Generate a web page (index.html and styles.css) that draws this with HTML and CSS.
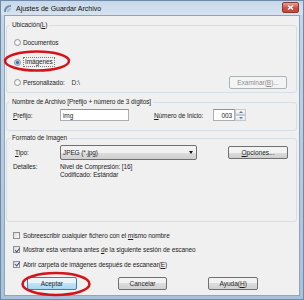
FILE: index.html
```html
<!DOCTYPE html>
<html lang="es">
  <head>
    <meta charset="UTF-8" />
    <title>Ajustes de Guardar Archivo</title>
    <link rel="stylesheet" href="styles.css">
  </head>
  <body>
    <div class="window">
      <div class="titlebar">
        <svg class="app-icon" width="9" height="9" viewBox="0 0 9 9">
          <path d="M1 8 C1 4 3 1 8 1 L8 3 C5 3 3 5 3 8 Z" fill="#6f8fb0" />
          <path d="M4 8 C4 6 5 4 8 4 L8 6 C6.5 6 6 7 6 8 Z" fill="#a9c0d8" />
        </svg>
        <span class="title">Ajustes de Guardar Archivo</span>
        <div class="close">
          <svg width="7" height="5" viewBox="0 0 7 5">
            <path d="M1 0.5 L6 4.5 M6 0.5 L1 4.5" stroke="#fff" stroke-width="1.4" />
          </svg>
        </div>
      </div>

      <div class="client">
        <fieldset class="group loc">
          <legend>Ubicación(<u>L</u>)</legend>
          <div class="row">
            <span class="radio"></span><span>Documentos</span>
          </div>
          <div class="row">
            <span class="radio checked"></span><span class="focus">Imágenes</span>
          </div>
          <div class="row">
            <span class="radio"></span><span>Personalizado:</span>
            <span class="path">D:\</span>
            <button class="btn disabled">Examinar(<u>B</u>)...</button>
          </div>
        </fieldset>

        <fieldset class="group name">
          <legend>Nombre de Archivo [Prefijo + número de 3 dígitos]</legend>
          <div class="field-row">
            <span class="lbl"><u>P</u>refijo:</span>
            <span class="input prefix">img</span>
            <span class="start-lbl"><u>N</u>úmero de Inicio:</span>
            <span class="input number">003</span>
            <span class="spin">
              <span class="up"></span>
              <span class="down"></span>
            </span>
          </div>
        </fieldset>

        <fieldset class="group format">
          <legend>Formato de Imagen</legend>
          <div class="field-row type-row">
            <span class="lbl"><u>T</u>ipo:</span>
            <span class="select"><span>JPEG (*.jpg)</span><span class="arrow"></span></span>
            <button class="btn options"><u>O</u>pciones...</button>
          </div>
          <div class="details">
            <span class="lbl">Detalles:</span>
            <div class="values">
              <div>Nivel de Compresión: [16]</div>
              <div>Codificado: Estándar</div>
            </div>
          </div>
        </fieldset>

        <div class="checks">
          <div class="check-row"><span class="checkbox"></span><span>Sobreescribir cualquier fichero con el <u>m</u>ismo nombre</span></div>
          <div class="check-row"><span class="checkbox checked"></span><span>Mostrar esta ventana antes <u>d</u>e la siguiente sesión de escaneo</span></div>
          <div class="check-row"><span class="checkbox checked"></span><span>Abrir carpeta de imágenes después de escanear(<u>E</u>)</span></div>
        </div>

        <div class="actions">
          <button class="btn default">Aceptar</button>
          <button class="btn">Cancelar</button>
          <button class="btn">Ayuda(<u>H</u>)</button>
        </div>
      </div>

      <svg class="marks" width="304" height="300" viewBox="0 0 304 300">
        <ellipse cx="37" cy="61" rx="32" ry="9.5" fill="none" stroke="#d3141b" stroke-width="2.5" />
        <ellipse cx="56" cy="284" rx="33.5" ry="11" fill="none" stroke="#d3141b" stroke-width="2.5" />
      </svg>
    </div>
  </body>
</html>
```

FILE: styles.css
```css
body {
  margin: 0;
  font-family: "Liberation Sans", Arial, sans-serif;
  font-size: 6.5px;
  letter-spacing: -0.1px;
  color: #1e1e1e;
}
.window {
  position: relative;
  width: 304px;
  height: 300px;
  box-sizing: border-box;
  background: linear-gradient(#c6d6e7, #a9c1da);
  border: 1px solid #6f8aa6;
  padding: 0 3px 3px;
  display: flex;
  flex-direction: column;
}
.titlebar {
  height: 14px;
  display: flex;
  align-items: center;
  margin: 0 -3px;
  padding: 0 4px 0 2px;
  background: linear-gradient(#c8d8e9, #d6e2ef);
}
.app-icon {
  margin-right: 4px;
}
.title {
  font-size: 7px;
  letter-spacing: 0;
  color: #111;
  flex: 1;
}
.close {
  width: 15px;
  height: 9px;
  border: 1px solid #8c3a35;
  border-radius: 2px;
  background: linear-gradient(#e5a49c, #c9513f 55%, #c44835);
  display: flex;
  align-items: center;
  justify-content: center;
  margin-top: -2px;
}
.client {
  flex: 1;
  background: #f0f0f0;
  border: 1px solid #8da6bf;
  display: flex;
  flex-direction: column;
}
.group {
  margin: 0 2px 0 1px;
  padding: 0;
  border: 1px solid #d5dfe5;
  border-radius: 3px;
  min-width: 0;
}
.group legend {
  margin-left: 3px;
  padding: 0 2px;
  line-height: 8px;
}
.loc {
  margin-top: 5px;
  padding-top: 3px;
}
.row {
  height: 20px;
  display: flex;
  align-items: center;
  padding-left: 7px;
}
.radio {
  width: 7px;
  height: 7px;
  box-sizing: border-box;
  border: 1px solid #8d959c;
  border-radius: 50%;
  background: radial-gradient(#fff, #e6e6e6);
  margin-right: 2px;
}
.radio.checked {
  background: radial-gradient(#3f6fa8 30%, #9fc0e2 55%, #e6e6e6 70%);
}
.focus {
  border: 1px dotted #777;
  padding: 0 1px;
  line-height: 8px;
}
.path {
  margin-left: 7px;
  color: #333;
}
.btn {
  font: inherit;
  height: 13px;
  padding: 0;
  border: 1px solid #707070;
  border-radius: 2px;
  background: linear-gradient(#f2f2f2 50%, #dddddd 50%, #cfcfcf);
  color: #1e1e1e;
}
.btn.disabled {
  border-color: #adb2b5;
  background: #f4f4f4;
  color: #8d8d8d;
}
.loc .btn {
  width: 58px;
  margin-left: auto;
  margin-right: 9px;
}
.name {
  margin-top: 5px;
  padding: 3px 0 9px;
}
.field-row {
  display: flex;
  align-items: center;
  padding-left: 6px;
}
.lbl {
  width: 47px;
}
.input {
  height: 12px;
  box-sizing: border-box;
  border: 1px solid #abadb3;
  border-top-color: #8e9196;
  background: #fff;
  display: flex;
  align-items: center;
  padding: 0 2px;
}
.prefix {
  width: 69px;
}
.start-lbl {
  margin-left: 25px;
  width: 59px;
}
.number {
  width: 22px;
  justify-content: flex-end;
}
.spin {
  width: 11px;
  height: 12px;
  display: flex;
  flex-direction: column;
}
.spin span {
  flex: 1;
  border: 1px solid #c4c9ce;
  background: linear-gradient(#f7f9fb, #e1e7ee);
  position: relative;
}
.spin .up::after,
.spin .down::after {
  content: "";
  position: absolute;
  left: 3px;
  top: 1px;
  border: 2px solid transparent;
}
.spin .up::after {
  border-bottom-color: #6a7a8c;
  top: -1px;
}
.spin .down::after {
  border-top-color: #6a7a8c;
}
.format {
  margin-top: 3px;
  padding: 3px 0 0;
  height: 83px;
}
.type-row .lbl {
  padding-left: 2px;
  width: 45px;
}
.select {
  width: 137px;
  height: 15px;
  box-sizing: border-box;
  border: 1px solid #707070;
  border-radius: 2px;
  background: linear-gradient(#f2f2f2 50%, #dddddd 50%, #cfcfcf);
  display: flex;
  align-items: center;
  padding-left: 2px;
  position: relative;
}
.arrow {
  position: absolute;
  right: 3px;
  top: 5px;
  border: 2.5px solid transparent;
  border-top: 3px solid #111;
}
.options {
  width: 60px;
  margin-left: auto;
  margin-right: 8px;
}
.details {
  display: flex;
  padding: 3px 0 0 6px;
  line-height: 8px;
}
.checks {
  margin-top: 6px;
  padding-left: 8px;
}
.check-row {
  height: 14.5px;
  display: flex;
  align-items: center;
}
.checkbox {
  width: 7px;
  height: 7px;
  box-sizing: border-box;
  border: 1px solid #8f8f8f;
  background: linear-gradient(135deg, #dcdcdc, #fbfbfb);
  margin-right: 3px;
  position: relative;
}
.checkbox.checked::after {
  content: "";
  position: absolute;
  left: 1.5px;
  top: -0.5px;
  width: 1.5px;
  height: 3.5px;
  border: solid #3b4c8c;
  border-width: 0 1.2px 1.2px 0;
  transform: rotate(40deg);
}
.actions {
  display: flex;
  margin-top: 5px;
  padding-left: 22px;
}
.actions .btn {
  width: 56px;
  height: 13px;
  margin-right: 41px;
}
.btn.default {
  border-color: #3c7fb1;
  background: linear-gradient(#e8f5fc 50%, #bfe3f7 50%, #a9d8f3);
}
.marks {
  position: absolute;
  left: -1px;
  top: -1px;
  pointer-events: none;
}
```
